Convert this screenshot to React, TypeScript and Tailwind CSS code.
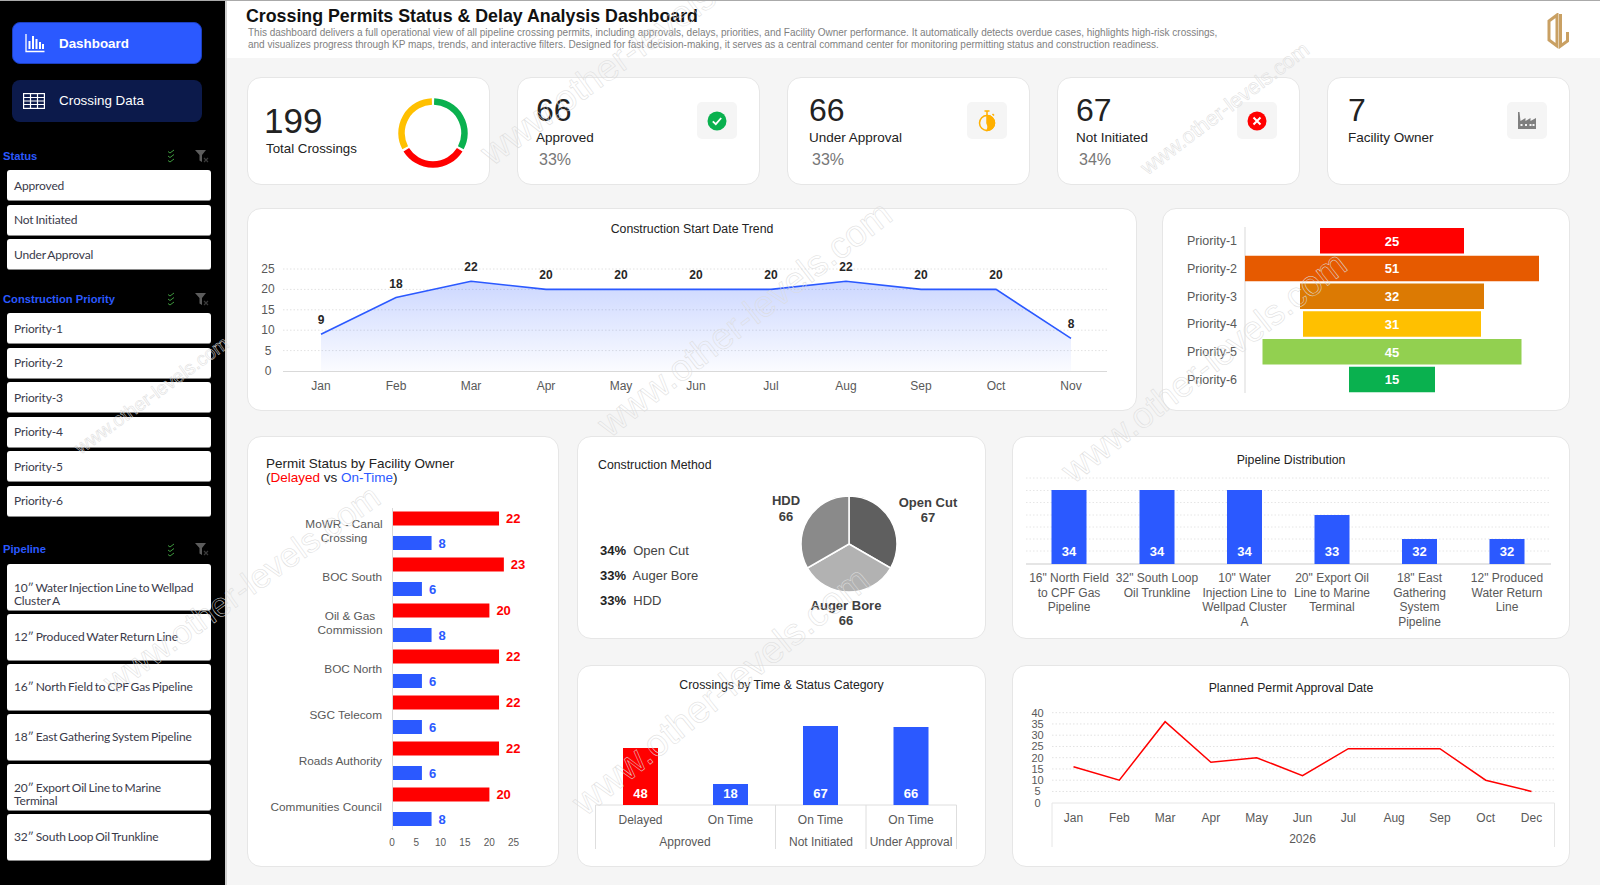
import React from 'react';

const BLUE = '#2b59ff';
const RED = '#ff0000';
const GREY = '#595959';
const card = 'bg-white rounded-[14px] border border-[#e6e6e6]';

const statuses = ['Approved', 'Not Initiated', 'Under Approval'];
const priorities = ['Priority-1', 'Priority-2', 'Priority-3', 'Priority-4', 'Priority-5', 'Priority-6'];
const pipelines = [
  { name: '10″ Water Injection Line to Wellpad Cluster A', two: true },
  { name: '12″ Produced Water Return Line', two: false },
  { name: '16″ North Field to CPF Gas Pipeline', two: false },
  { name: '18″ East Gathering System Pipeline', two: false },
  { name: '20″ Export Oil Line to Marine Terminal', two: true },
  { name: '32″ South Loop Oil Trunkline', two: false },
];

const trend = [
  ['Jan', 9], ['Feb', 18], ['Mar', 22], ['Apr', 20], ['May', 20], ['Jun', 20],
  ['Jul', 20], ['Aug', 22], ['Sep', 20], ['Oct', 20], ['Nov', 8],
] as const;

const funnel = [
  { label: 'Priority-1', value: 25, width: 144, color: '#ff0000' },
  { label: 'Priority-2', value: 51, width: 294, color: '#e65a00' },
  { label: 'Priority-3', value: 32, width: 184, color: '#dc7a03' },
  { label: 'Priority-4', value: 31, width: 178, color: '#ffc000' },
  { label: 'Priority-5', value: 45, width: 259, color: '#92d050' },
  { label: 'Priority-6', value: 15, width: 86, color: '#0ab14f' },
];

const owners = [
  { lines: ['MoWR - Canal', 'Crossing'], delayed: 22, onTime: 8 },
  { lines: ['BOC South'], delayed: 23, onTime: 6 },
  { lines: ['Oil & Gas', 'Commission'], delayed: 20, onTime: 8 },
  { lines: ['BOC North'], delayed: 22, onTime: 6 },
  { lines: ['SGC Telecom'], delayed: 22, onTime: 6 },
  { lines: ['Roads Authority'], delayed: 22, onTime: 6 },
  { lines: ['Communities Council'], delayed: 20, onTime: 8 },
];

const pipeBars = [
  { x: 1069, top: 490, value: 34, lines: ['16" North Field', 'to CPF Gas', 'Pipeline'] },
  { x: 1157, top: 490, value: 34, lines: ['32" South Loop', 'Oil Trunkline'] },
  { x: 1244.5, top: 490, value: 34, lines: ['10" Water', 'Injection Line to', 'Wellpad Cluster', 'A'] },
  { x: 1332, top: 515, value: 33, lines: ['20" Export Oil', 'Line to Marine', 'Terminal'] },
  { x: 1419.5, top: 539, value: 32, lines: ['18" East', 'Gathering', 'System', 'Pipeline'] },
  { x: 1507, top: 539, value: 32, lines: ['12" Produced', 'Water Return', 'Line'] },
];

const timeBars = [
  { x: 640.5, top: 748, value: 48, color: RED, label: 'Delayed' },
  { x: 730.5, top: 784, value: 18, color: BLUE, label: 'On Time' },
  { x: 820.5, top: 726, value: 67, color: BLUE, label: 'On Time' },
  { x: 911, top: 727, value: 66, color: BLUE, label: 'On Time' },
];

const planned = [
  ['Jan', 16], ['Feb', 10], ['Mar', 36], ['Apr', 18], ['May', 20], ['Jun', 12],
  ['Jul', 24], ['Aug', 24], ['Sep', 24], ['Oct', 10], ['Dec', 5],
] as const;

// svg viewBox is written in page coordinates, it makes reading the chart numbers easier
function Chart({ x, y, w, h, children }: { x: number; y: number; w: number; h: number; children: React.ReactNode }) {
  return (
    <svg className="block shrink-0" width={w} height={h} viewBox={`${x} ${y} ${w} ${h}`}>
      {children}
    </svg>
  );
}

function arc(cx: number, cy: number, r: number, from: number, to: number) {
  const pt = (a: number) => {
    const rad = (a * Math.PI) / 180;
    return `${(cx + r * Math.sin(rad)).toFixed(2)} ${(cy - r * Math.cos(rad)).toFixed(2)}`;
  };
  return `M${pt(from)} A${r} ${r} 0 0 1 ${pt(to)}`;
}

function ChecksIcon() {
  return (
    <svg width="8" height="14" viewBox="0 0 8 14" fill="none" stroke="#3f9a3f" strokeWidth="1">
      <path d="M1 2.5 3 4 7 1" />
      <path d="M1 7 3 8.5 7 5.5" />
      <path d="M1 11.5 3 13 7 10" />
    </svg>
  );
}

function ClearFilterIcon() {
  return (
    <svg width="15" height="13" viewBox="0 0 15 13">
      <path d="M0 0H11L7 5V12L4.500 10.500V5Z" fill="#5c5c5c" />
      <path d="M9 8 13 12M13 8 9 12" stroke="#3a3a3a" strokeWidth="1.200" />
    </svg>
  );
}

function SectionHead({ title }: { title: string }) {
  return (
    <div className="flex items-center h-4 pl-[3px]">
      <span className="text-[11.2px] font-bold text-[#2b59ff] w-[164px]">{title}</span>
      <span className="w-[8px] flex"><ChecksIcon /></span>
      <span className="ml-5 flex"><ClearFilterIcon /></span>
    </div>
  );
}

function Slicer({ label, tall, two }: { label: string; tall?: boolean; two?: boolean }) {
  return (
    <div
      className={`ml-[7px] w-[204px] bg-white rounded-[3px] border-b border-[#8a8a8a] flex flex-col justify-center px-[7px] font-['Lato',sans-serif] text-[12px] leading-[13px] tracking-[-0.15px] [word-spacing:-1px] text-[#3a3a4a] ${
        tall ? 'h-[47px]' : 'h-[31px]'
      } ${two ? 'pt-[14px]' : ''}`}
    >
      {label}
    </div>
  );
}

function Sidebar() {
  return (
    <aside className="w-[227px] shrink-0 bg-black pt-[21px] border-r-[2px] border-[#d0d0d0] box-border">
      <div className="ml-3 w-[190px] h-[42px] rounded-lg bg-[#2b59ff] border border-[#1c3fc0] flex items-center text-white text-[13.400px] font-bold">
        <svg className="ml-[12px] mr-[14px]" width="20" height="20" viewBox="0 0 20 20" fill="none" stroke="#fff">
          <path d="M1 1V18.500H19.500" strokeWidth="1.300" />
          <path d="M4.500 8V16M8 3V16M11.500 6V16M15 9V16M18 11V16" strokeWidth="2" />
        </svg>
        <span className="pt-[3px]">Dashboard</span>
      </div>
      <div className="mt-4 ml-3 w-[190px] h-[42px] rounded-lg bg-[#0c1a4b] flex items-center text-white text-[13.400px]">
        <svg className="ml-[11px] mr-[14px]" width="22" height="16" viewBox="0 0 22 16" fill="none" stroke="#fff" strokeWidth="1.200">
          <rect x="0.600" y="0.600" width="20.800" height="14.800" />
          <path d="M0.600 4.500H21.400M0.600 8H21.400M0.600 11.500H21.400M7.500 1V15M14.500 1V15" />
        </svg>
        Crossing Data
      </div>

      <div className="mt-[26px]"><SectionHead title="Status" /></div>
      <div className="mt-[6px] flex flex-col gap-[3.500px]">
        {statuses.map(s => <Slicer key={s} label={s} />)}
      </div>

      <div className="mt-[21px]"><SectionHead title="Construction Priority" /></div>
      <div className="mt-[6px] flex flex-col gap-[3.500px]">
        {priorities.map(p => <Slicer key={p} label={p} />)}
      </div>

      <div className="mt-[25px]"><SectionHead title="Pipeline" /></div>
      <div className="mt-[6px] flex flex-col gap-[3px]">
        {pipelines.map(p => <Slicer key={p.name} label={p.name} tall two={p.two} />)}
      </div>
    </aside>
  );
}

function Logo() {
  return (
    <svg width="24" height="36" viewBox="0 0 24 36" fill="none" stroke="#c9a063" strokeWidth="3">
      <path d="M11 2 3 8V27L11 33Z" />
      <path d="M14.500 1V33L21.500 28V19" />
    </svg>
  );
}

function IconBox({ children }: { children: React.ReactNode }) {
  return <div className="w-10 h-[37px] mt-6 rounded-[5px] bg-[#f5f5f5] flex items-center justify-center shrink-0">{children}</div>;
}

function KpiCard({ value, label, pct, icon, inset }: { value: string; label: string; pct?: string; icon: React.ReactNode; inset: string }) {
  return (
    <div className={`${card} h-[108px] ${inset} pr-[22px] flex justify-between`}>
      <div className="pt-[14px]">
        <div className="text-[32px] leading-9 text-[#222]">{value}</div>
        <div className="mt-[2px] text-[13.500px] leading-4 text-[#222]">{label}</div>
        {pct && <div className="mt-[5px] ml-[3px] text-base leading-[18px] text-[#777]">{pct}</div>}
      </div>
      <IconBox>{icon}</IconBox>
    </div>
  );
}

function KpiRow() {
  return (
    <div className="grid grid-cols-5 gap-[27px]">
      <div className={`${card} h-[108px] pl-[16px] pr-[20px] flex justify-between`}>
        <div className="pt-[25px]">
          <div className="text-[35px] leading-9 text-[#222]">199</div>
          <div className="mt-[2px] pl-[2px] text-[13.300px] leading-4 text-[#222]">Total Crossings</div>
        </div>
        <svg className="mt-[18px]" width="72" height="74" viewBox="0 0 72 74" fill="none" strokeWidth="6.500">
          <path d={arc(36, 37, 31.500, 2, 118)} stroke="#0ab14f" />
          <path d={arc(36, 37, 31.500, 122, 238)} stroke="#ff0000" />
          <path d={arc(36, 37, 31.500, 242, 358)} stroke="#ffc000" />
        </svg>
      </div>
      <KpiCard
        value="66"
        label="Approved"
        pct="33%"
        inset="pl-[18px]"
        icon={
          <svg width="20" height="20" viewBox="0 0 20 20">
            <circle cx="10" cy="10" r="9.500" fill="#0ab14f" />
            <path d="M5.800 10.400 8.800 13.200 14.200 7" fill="none" stroke="#fff" strokeWidth="1.800" />
          </svg>
        }
      />
      <KpiCard
        value="66"
        label="Under Approval"
        pct="33%"
        inset="pl-[21px]"
        icon={
          <svg width="18" height="22" viewBox="0 0 18 22" fill="none" stroke="#ffb000" strokeWidth="1.500">
            <circle cx="9" cy="13" r="7.500" />
            <path d="M9 13V5.500A7.500 7.500 0 0 1 9 20.500 7.500 7.500 0 0 0 9 13Z" fill="#ffb000" />
            <path d="M6.500 1H11.500M9 1V5M14.500 4 16 5.500" />
          </svg>
        }
      />
      <KpiCard
        value="67"
        label="Not Initiated"
        pct="34%"
        inset="pl-[18px]"
        icon={
          <svg width="20" height="20" viewBox="0 0 20 20">
            <circle cx="10" cy="10" r="9.500" fill="#ff0000" />
            <path d="M6.500 6.500 13.500 13.500M13.500 6.500 6.500 13.500" stroke="#fff" strokeWidth="2" />
          </svg>
        }
      />
      <KpiCard
        value="7"
        label="Facility Owner"
        inset="pl-[20px]"
        icon={
          <svg width="20" height="19" viewBox="0 0 20 19">
            <path d="M1 18V1H2.500L3.500 10 8.500 7V10L13.500 7V10L19 7V18Z" fill="#7f7f7f" />
            <path d="M3.500 14H5.500M8 14H10M12.500 14H14.500M15.500 14H17.500" stroke="#f5f5f5" strokeWidth="2" />
          </svg>
        }
      />
    </div>
  );
}

function TrendCard() {
  const px = (i: number) => 321 + i * 75;
  const py = (v: number) => 371 - v * 4.08;
  const line = trend.map(([, v], i) => `${px(i)},${py(v)}`).join(' ');
  return (
    <div className={`${card} w-[890px] h-[203px]`}>
      <div className="h-10 flex items-center justify-center text-[12.300px] text-[#222]">Construction Start Date Trend</div>
      <Chart x={248} y={249} w={888} h={161}>
        <defs>
          <linearGradient id="trendFill" x1="0" y1="0" x2="0" y2="1">
            <stop offset="0" stopColor={BLUE} stopOpacity="0.24" />
            <stop offset="1" stopColor={BLUE} stopOpacity="0.02" />
          </linearGradient>
        </defs>
        {[5, 10, 15, 20, 25].map(v => (
          <line key={v} x1={283} x2={1107} y1={py(v)} y2={py(v)} stroke="#e2e2e2" strokeDasharray="1.500 2" />
        ))}
        <polygon points={`321,371 ${line} 1071,371`} fill="url(#trendFill)" />
        <line x1={283} x2={1107} y1={371.500} y2={371.500} stroke="#d9d9d9" strokeWidth="1.200" />
        <polyline points={line} fill="none" stroke={BLUE} strokeWidth="1.600" />
        {[0, 5, 10, 15, 20, 25].map(v => (
          <text key={v} x={268} y={py(v) + 4} fontSize="12" fill={GREY} textAnchor="middle">{v}</text>
        ))}
        {trend.map(([m, v], i) => (
          <g key={m} textAnchor="middle">
            <text x={px(i)} y={390} fontSize="12" fill={GREY}>{m}</text>
            <text x={px(i)} y={py(v) - 10} fontSize="12" fontWeight="700" fill="#262626">{v}</text>
          </g>
        ))}
      </Chart>
    </div>
  );
}

function FunnelCard() {
  return (
    <div className={`${card} flex-1 h-[203px]`}>
      <Chart x={1163} y={209} w={406} h={201}>
        <line x1={1245} x2={1245} y1={227} y2={393} stroke="#d9d9d9" />
        {funnel.map((f, i) => {
          const top = 228 + i * 27.750;
          return (
            <g key={f.label}>
              <text x={1237} y={top + 17} fontSize="12.500" fill={GREY} textAnchor="end">{f.label}</text>
              <rect x={1392 - f.width / 2} y={top} width={f.width} height={25.500} fill={f.color} />
              <text x={1392} y={top + 17.500} fontSize="13" fontWeight="700" fill="#fff" textAnchor="middle">{f.value}</text>
            </g>
          );
        })}
      </Chart>
    </div>
  );
}

function OwnerCard() {
  const unit = 4.82;
  return (
    <div className={`${card} w-[312px] h-[431px] shrink-0`}>
      <div className="pt-5 pl-[18px] h-[48px] text-[13.500px] leading-[14px] text-[#222]">
        Permit Status by Facility Owner
        <br />
        (<span className="text-[#ff0000]">Delayed</span> vs <span className="text-[#2b59ff]">On-Time</span>)
      </div>
      <Chart x={248} y={485} w={310} h={381}>
        <line x1={392.500} x2={392.500} y1={508} y2={830} stroke="#d9d9d9" />
        {owners.map((o, i) => {
          const redTop = 511.500 + i * 46;
          const blueTop = 536 + i * 46;
          const mid = 531 + i * 46;
          return (
            <g key={o.lines[0]}>
              <text fontSize="11.800" fill={GREY} textAnchor={o.lines.length > 1 ? 'middle' : 'end'}>
                {o.lines.map((l, n) => (
                  <tspan
                    key={l}
                    x={o.lines.length > 1 ? (i === 0 ? 344 : 350) : 382}
                    y={o.lines.length > 1 ? mid - 3 + n * 13.500 : mid + 4}
                  >
                    {l}
                  </tspan>
                ))}
              </text>
              <rect x={393} y={redTop} width={o.delayed * unit} height={14} fill={RED} />
              <rect x={393} y={blueTop} width={o.onTime * unit} height={14} fill={BLUE} />
              <text x={393 + o.delayed * unit + 7} y={redTop + 11.500} fontSize="13" fontWeight="700" fill={RED}>{o.delayed}</text>
              <text x={393 + o.onTime * unit + 7} y={blueTop + 11.500} fontSize="13" fontWeight="700" fill={BLUE}>{o.onTime}</text>
            </g>
          );
        })}
        {[0, 5, 10, 15, 20, 25].map((t, i) => (
          <text key={t} x={392 + i * 24.300} y={846} fontSize="10" fill={GREY} textAnchor="middle">{t}</text>
        ))}
      </Chart>
    </div>
  );
}

function MethodCard() {
  const cx = 849;
  const cy = 544;
  const r = 48;
  return (
    <div className={`${card} h-[203px]`}>
      <div className="pt-5 pl-5 h-9 text-[12.300px] leading-4 text-[#222]">Construction Method</div>
      <div className="flex">
        <div className="w-[172px] pl-[22px] pt-[70px] flex flex-col gap-[9px] text-[13px] leading-4 text-[#444]">
          <div><b className="text-[#222]">34%</b>&nbsp; Open Cut</div>
          <div><b className="text-[#222]">33%</b>&nbsp; Auger Bore</div>
          <div><b className="text-[#222]">33%</b>&nbsp; HDD</div>
        </div>
        <Chart x={750} y={473} w={235} h={165}>
          <g stroke="#fff" strokeWidth="1.500">
            <path d={`M${cx} ${cy} L${cx} ${cy - r} A${r} ${r} 0 0 1 ${cx + 41.570} ${cy + 24} Z`} fill="#5f5f5f" />
            <path d={`M${cx} ${cy} L${cx + 41.570} ${cy + 24} A${r} ${r} 0 0 1 ${cx - 41.570} ${cy + 24} Z`} fill="#b2b2b2" />
            <path d={`M${cx} ${cy} L${cx - 41.570} ${cy + 24} A${r} ${r} 0 0 1 ${cx} ${cy - r} Z`} fill="#8a8a8a" />
          </g>
          <g fontSize="13" fontWeight="700" fill="#404040" textAnchor="middle">
            <text x={786} y={505}>HDD</text>
            <text x={786} y={521}>66</text>
            <text x={928} y={507}>Open Cut</text>
            <text x={928} y={522}>67</text>
            <text x={846} y={610}>Auger Bore</text>
            <text x={846} y={625}>66</text>
          </g>
        </Chart>
      </div>
    </div>
  );
}

function PipelineCard() {
  return (
    <div className={`${card} h-[203px]`}>
      <div className="pt-[15px] h-[31px] text-center text-[12.300px] leading-4 text-[#222]">Pipeline Distribution</div>
      <Chart x={1013} y={468} w={556} h={170}>
        {[478, 490.500, 502.500, 515, 527, 539, 551].map(y => (
          <line key={y} x1={1026} x2={1551} y1={y} y2={y} stroke="#e6e6e6" strokeDasharray="1.500 2" />
        ))}
        <line x1={1026} x2={1551} y1={564} y2={564} stroke="#dcdcdc" strokeWidth="1.500" />
        {pipeBars.map(b => (
          <g key={b.x} textAnchor="middle">
            <rect x={b.x - 17.500} y={b.top} width={35} height={564 - b.top} fill={BLUE} />
            <text x={b.x} y={556} fontSize="13" fontWeight="700" fill="#fff">{b.value}</text>
            <text fontSize="12" fill={GREY}>
              {b.lines.map((l, n) => (
                <tspan key={l} x={b.x} y={582 + n * 14.500}>{l}</tspan>
              ))}
            </text>
          </g>
        ))}
      </Chart>
    </div>
  );
}

function TimeCard() {
  return (
    <div className={`${card} h-[202px]`}>
      <div className="pt-[11px] h-[27px] text-center text-[12.300px] leading-4 text-[#222]">Crossings by Time &amp; Status Category</div>
      <Chart x={578} y={693} w={406} h={173}>
        <path d="M595.500 849V805H956.500V849M775.500 805V849M866 805V849" fill="none" stroke="#dedede" />
        {timeBars.map(b => (
          <g key={b.x} textAnchor="middle">
            <rect x={b.x - 17.500} y={b.top} width={35} height={805 - b.top} fill={b.color} />
            <text x={b.x} y={798} fontSize="13" fontWeight="700" fill="#fff">{b.value}</text>
            <text x={b.x} y={824} fontSize="12" fill={GREY}>{b.label}</text>
          </g>
        ))}
        <g fontSize="12" fill={GREY} textAnchor="middle">
          <text x={685} y={846}>Approved</text>
          <text x={821} y={846}>Not Initiated</text>
          <text x={911} y={846}>Under Approval</text>
        </g>
      </Chart>
    </div>
  );
}

function PlannedCard() {
  const px = (i: number) => 1073.500 + i * 45.800;
  const py = (v: number) => 802.700 - v * 2.250;
  return (
    <div className={`${card} h-[202px]`}>
      <div className="pt-[14px] h-[30px] text-center text-[12.300px] leading-4 text-[#222]">Planned Permit Approval Date</div>
      <Chart x={1013} y={696} w={556} h={170}>
        {[5, 10, 15, 20, 25, 30, 35, 40].map(v => (
          <line key={v} x1={1052} x2={1554} y1={py(v)} y2={py(v)} stroke="#e2e2e2" strokeDasharray="1.500 2" />
        ))}
        <path d="M1052 847V803H1554.500V847" fill="none" stroke="#e6e6e6" />
        <polyline points={planned.map(([, v], i) => `${px(i)},${py(v)}`).join(' ')} fill="none" stroke={RED} strokeWidth="1.500" />
        {[0, 5, 10, 15, 20, 25, 30, 35, 40].map(v => (
          <text key={v} x={1037.500} y={py(v) + 4} fontSize="11" fill={GREY} textAnchor="middle">{v}</text>
        ))}
        {planned.map(([m], i) => (
          <text key={m} x={px(i)} y={822} fontSize="12" fill={GREY} textAnchor="middle">{m}</text>
        ))}
        <text x={1302.500} y={843} fontSize="12" fill={GREY} textAnchor="middle">2026</text>
      </Chart>
    </div>
  );
}

function Watermarks() {
  const base = 'absolute origin-left whitespace-nowrap leading-none pointer-events-none text-transparent [-webkit-text-stroke:0.5px_#dcdcdc]';
  return (
    <>
      <span className={`${base} left-[602px] top-[409px] text-[37px] -rotate-[37.6deg]`}>www.other-levels.com</span>
      <span className={`${base} left-[1066px] top-[456px] text-[36px] -rotate-[38deg]`}>www.other-levels.com</span>
      <span className={`${base} left-[107px] top-[667px] text-[34px] -rotate-[35.6deg]`}>www.other-levels.com</span>
      <span className={`${base} left-[577px] top-[787px] text-[38px] -rotate-[39deg]`}>www.other-levels.com</span>
      <span className={`${base} left-[77px] top-[439px] text-[19px] -rotate-[36deg]`}>www.other-levels.com</span>
      <span className={`${base} left-[1143px] top-[158px] text-[21px] -rotate-[37deg]`}>www.other-levels.com</span>
      <span className={`${base} left-[485px] top-[137px] text-[37px] -rotate-[36deg]`}>www.other-levels.com</span>
    </>
  );
}

export default function App() {
  return (
    <div className="relative w-[1600px] h-[885px] overflow-hidden flex border-t border-[#aaaaaa] box-border bg-[#f5f5f5] font-['Liberation_Sans',Arial,sans-serif]">
      <Sidebar />
      <main className="flex-1 min-w-0">
        <header className="h-[57px] bg-white pl-[19px] pr-[30px] pt-[5px] flex justify-between">
          <div>
            <h1 className="text-[17.800px] leading-5 font-bold text-[#111]">Crossing Permits Status &amp; Delay Analysis Dashboard</h1>
            <p className="mt-[1px] ml-[2px] text-[10px] leading-3 text-[#7f7f7f]">
              This dashboard delivers a full operational view of all pipeline crossing permits, including approvals, delays, priorities, and Facility Owner performance. It automatically detects overdue cases, highlights high-risk crossings,
              <br />
              and visualizes progress through KP maps, trends, and interactive filters. Designed for fast decision-making, it serves as a central command center for monitoring permitting status and construction readiness.
            </p>
          </div>
          <div className="pt-[7px]"><Logo /></div>
        </header>

        <div className="pl-[20px] pr-[30px] pt-[19px]">
          <KpiRow />
          <div className="mt-[23px] flex gap-[25px]">
            <TrendCard />
            <FunnelCard />
          </div>
          <div className="mt-[25px] flex gap-[18px]">
            <OwnerCard />
            <div className="grid grid-cols-[409px_558px] gap-x-[26px] gap-y-[26px]">
              <MethodCard />
              <PipelineCard />
              <TimeCard />
              <PlannedCard />
            </div>
          </div>
        </div>
      </main>
      <Watermarks />
    </div>
  );
}
